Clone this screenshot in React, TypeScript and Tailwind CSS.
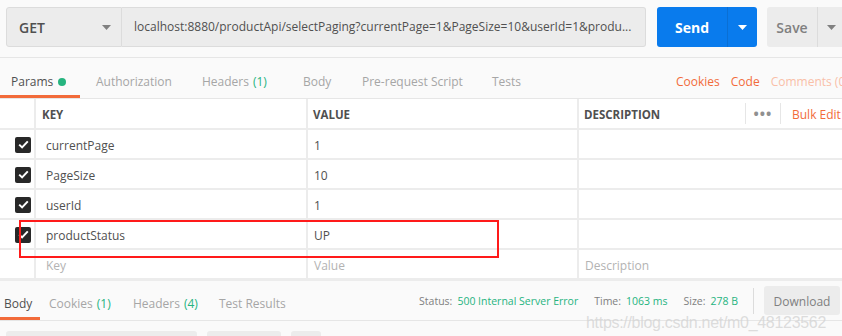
import React from "react";

const Caret = ({ color }: { color: string }) => (
  <svg width="9" height="5" viewBox="0 0 9 5">
    <path d="M0 0h9L4.5 5z" fill={color} />
  </svg>
);

const Check = () => (
  <span className="flex h-[16px] w-[16px] items-center justify-center rounded-[2px] bg-[#282828]">
    <svg width="11" height="9" viewBox="0 0 11 9">
      <path d="M1.2 4.6l2.9 2.8L9.8 1.4" fill="none" stroke="#fff" strokeWidth="2" />
    </svg>
  </span>
);

const params = [
  { key: "currentPage", value: "1" },
  { key: "PageSize", value: "10" },
  { key: "userId", value: "1" },
  { key: "productStatus", value: "UP" },
];

const tabs = [
  { label: "Authorization", w: "w-[106px]" },
  { label: "Headers", count: "(1)", w: "w-[101px]" },
  { label: "Body", w: "w-[59px]" },
  { label: "Pre-request Script", w: "w-[130px]" },
  { label: "Tests", w: "w-[200px]" },
];

export default function App() {
  return (
    <div className="relative h-[336px] w-[842px] overflow-hidden bg-[#fafafa] font-['Open_Sans',sans-serif] text-[12px] text-[#505050]">
      {/* request bar */}
      <div className="flex h-[58px] border-b border-[#e6e6e6] px-[6px] pt-[7px]">
        <div className="flex h-[40px] w-[116px] shrink-0 items-center justify-between rounded-l-[3px] border border-[#dcdcdc] bg-[#ececec] pl-[12px] pr-[10px]">
          <span className="text-[14px] font-semibold text-[#505050]">GET</span>
          <Caret color="#808080" />
        </div>
        <div className="flex h-[40px] w-[524px] shrink-0 items-center overflow-hidden whitespace-nowrap rounded-r-[3px] border-y border-r border-[#dcdcdc] bg-[#ececec] pl-[12px] text-[12px] text-[#505050]">
          localhost:8880/productApi/selectPaging?currentPage=1&amp;PageSize=10&amp;userId=1&amp;produ...
        </div>
        <div className="ml-[11px] flex h-[40px] w-[100px] shrink-0 rounded-[3px] bg-[#097bed] text-white">
          <div className="flex w-[70px] items-center justify-center text-[14px] font-bold">Send</div>
          <div className="flex flex-1 items-center justify-center border-l border-[#0a6fd4]">
            <Caret color="#ffffff" />
          </div>
        </div>
        <div className="ml-[10px] flex h-[40px] w-[100px] shrink-0 rounded-[3px] bg-[#ececec] text-[#808080]">
          <div className="flex w-[50px] items-center justify-center text-[14px] font-semibold">Save</div>
          <div className="flex flex-1 items-center justify-start border-l border-[#dcdcdc] pl-[9px]">
            <Caret color="#808080" />
          </div>
        </div>
      </div>

      {/* request tabs */}
      <div className="flex h-[41px] items-stretch whitespace-nowrap border-b border-[#e6e6e6]">
        <div className="flex w-[80px] shrink-0 items-center gap-[5px] border-b-[3px] border-[#f26b3a] pl-[11px] pt-[11px] text-[#505050]">
          Params
          <span className="h-[8px] w-[8px] rounded-full bg-[#26b47f]" />
        </div>
        {tabs.map((t) => (
          <div key={t.label} className={`flex ${t.w} shrink-0 items-center pl-[16px] pt-[8px] text-[#a6a6a6]`}>
            {t.label}
            {t.count && <span className="ml-[4px] text-[#26b47f]">{t.count}</span>}
          </div>
        ))}
        <div className="flex shrink-0 items-center gap-[11px] pt-[8px]">
          <span className="text-[#f26b3a]">Cookies</span>
          <span className="text-[#f26b3a]">Code</span>
          <span className="text-[#f9bfa8]">Comments (0)</span>
        </div>
      </div>

      {/* params table */}
      <div className="bg-white">
        <div className="grid h-[31px] grid-cols-[36px_272px_271px_166px_36px_1fr] border-b-2 border-[#ececec] text-[11.5px] font-bold text-[#505050]">
          <div className="border-r-2 border-[#ececec]" />
          <div className="flex items-center border-r-2 border-[#ececec] pl-[6px] pt-[2px]">KEY</div>
          <div className="flex items-center border-r-2 border-[#ececec] pl-[5px] pt-[2px]">VALUE</div>
          <div className="flex items-center pl-[5px] pt-[2px]">DESCRIPTION</div>
          <div className="my-[4px] flex items-center justify-center border-x border-[#e6e6e6] text-[14px] tracking-[1px] text-[#909090]">
            •••
          </div>
          <div className="flex items-center whitespace-nowrap pl-[11px] pt-[2px] text-[12px] font-normal text-[#f26b3a]">
            Bulk Edit
          </div>
        </div>
        {params.map((p) => (
          <div
            key={p.key}
            className="grid h-[30px] grid-cols-[36px_272px_271px_1fr] border-b-2 border-[#ececec]"
          >
            <div className="flex items-center justify-end border-r-2 border-[#ececec] pr-[3px] pt-[1px]">
              <Check />
            </div>
            <div className="flex items-center border-r-2 border-[#ececec] pl-[10px] pt-[3px]">{p.key}</div>
            <div className="flex items-center border-r-2 border-[#ececec] pl-[6px] pt-[3px]">{p.value}</div>
            <div />
          </div>
        ))}
        <div className="grid h-[31px] grid-cols-[36px_272px_271px_1fr] border-b-[3px] border-[#ececec] text-[#b3b3b3]">
          <div className="border-r-2 border-[#ececec]" />
          <div className="flex items-center border-r-2 border-[#ececec] pl-[10px] pt-[3px]">Key</div>
          <div className="flex items-center border-r-2 border-[#ececec] pl-[6px] pt-[3px]">Value</div>
          <div className="flex items-center pl-[6px] pt-[3px]">Description</div>
        </div>
      </div>

      {/* response bar */}
      <div className="flex h-[40px] items-stretch whitespace-nowrap border-b border-[#e6e6e6]">
        <div className="flex w-[40px] shrink-0 items-center border-b-[3px] border-[#f26b3a] pl-[4px] pt-[10px] text-[#505050]">
          Body
        </div>
        <div className="flex w-[77px] shrink-0 items-center pl-[9px] pt-[7px] text-[#a6a6a6]">
          Cookies <span className="ml-[4px] text-[#26b47f]">(1)</span>
        </div>
        <div className="flex w-[86px] shrink-0 items-center pl-[16px] pt-[7px] text-[#a6a6a6]">
          Headers <span className="ml-[4px] text-[#26b47f]">(4)</span>
        </div>
        <div className="flex items-center pl-[16px] pt-[7px] text-[#a6a6a6]">Test Results</div>
        <div className="ml-auto flex items-center text-[10.5px]">
          <span className="pt-[3px] text-[#808080]">Status:</span>
          <span className="ml-[5px] pt-[3px] text-[#26b47f]">500 Internal Server Error</span>
          <span className="ml-[16px] pt-[3px] text-[#808080]">Time:</span>
          <span className="ml-[5px] pt-[3px] text-[#26b47f]">1063 ms</span>
          <span className="ml-[16px] pt-[3px] text-[#808080]">Size:</span>
          <span className="ml-[5px] pt-[3px] text-[#26b47f]">278 B</span>
          <span className="ml-[15px] h-[26px] border-l border-[#dcdcdc]" />
          <span className="ml-[10px] mr-[2px] flex h-[29px] w-[76px] items-center justify-center rounded-[3px] bg-[#ececec] pt-[2px] text-[12px] text-[#808080]">
            Download
          </span>
        </div>
      </div>

      {/* next toolbar, cut off */}
      <div className="flex gap-[10px] px-[6px] pt-[10px]">
        <div className="h-[10px] w-[191px] rounded-[3px] bg-[#ececec]" />
        <div className="h-[10px] w-[74px] rounded-[3px] bg-[#ececec]" />
        <div className="h-[10px] w-[30px] rounded-[3px] bg-[#ececec]" />
      </div>

      {/* annotation box */}
      <div className="absolute left-[19px] top-[220px] h-[38px] w-[480px] border-2 border-[#ff1a1a]" />

      {/* watermark */}
      <div className="pointer-events-none absolute left-[586px] top-[311px] whitespace-nowrap font-['Liberation_Sans',sans-serif] text-[16px] tracking-[-0.3px] text-[#d4d4d4]/80">
        https://blog.csdn.net/m0_48123562
      </div>
    </div>
  );
}
